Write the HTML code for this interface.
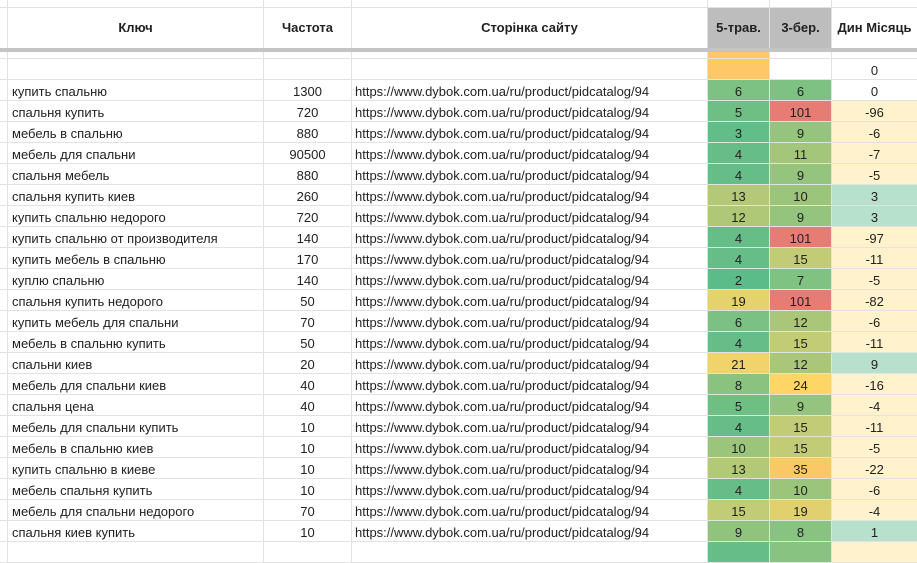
<!DOCTYPE html>
<html><head><meta charset="utf-8">
<style>
*{box-sizing:border-box;margin:0;padding:0}
body{width:917px;height:545px;overflow:hidden;background:#fff;font-family:"Liberation Sans","DejaVu Sans",sans-serif;font-size:13px;color:#222}
.r{display:flex;height:21px;border-bottom:1px solid #e2e2e2;white-space:nowrap}
.r>div{border-right:1px solid #e2e2e2;line-height:20px;padding-top:2px;overflow:hidden;flex:none}
.a{width:8px}.k{width:256px;padding-left:4px}.c{width:88px;text-align:center}.u{width:356px;padding-left:3px}
.t{width:62px;text-align:center}.d{width:85px;text-align:center;border-right:none!important}
.h{height:40px;font-weight:bold}.h>div{line-height:40px;padding-top:0}
.g{background:#bdbdbd}
.y{background:#fff2cc}.p{background:#b7e1cd}.R{background:#e67c73}
</style></head><body>
<div class="r" style="height:8px"><div class="a"></div><div class="k"></div><div class="c"></div><div class="u"></div><div class="t"></div><div class="t"></div><div class="d"></div></div>
<div class="r h" style="border-bottom:none"><div class="a"></div><div class="k" style="text-align:center;padding:0">Ключ</div><div class="c">Частота</div><div class="u" style="text-align:center;padding:0">Сторінка сайту</div><div class="t g">5-трав.</div><div class="t g">3-бер.</div><div class="d">Дин Місяць</div></div>
<div style="height:4px;background:#c4c4c4"></div>
<div class="r" style="height:7px"><div class="a"></div><div class="k"></div><div class="c"></div><div class="u"></div><div class="t" style="background:#fdc968"></div><div class="t"></div><div class="d" style="line-height:0"></div></div>
<div class="r"><div class="a"></div><div class="k"></div><div class="c"></div><div class="u"></div><div class="t" style="background:#fdc968"></div><div class="t"></div><div class="d">0</div></div>
<div class="r"><div class="a"></div><div class="k">купить спальню</div><div class="c">1300</div><div class="u">https://www.dybok.com.ua/ru/product/pidcatalog/94</div><div class="t" style="background:#7dc282">6</div><div class="t" style="background:#7dc282">6</div><div class="d">0</div></div>
<div class="r"><div class="a"></div><div class="k">спальня купить</div><div class="c">720</div><div class="u">https://www.dybok.com.ua/ru/product/pidcatalog/94</div><div class="t" style="background:#6fbf85">5</div><div class="t R">101</div><div class="d y">-96</div></div>
<div class="r"><div class="a"></div><div class="k">мебель в спальню</div><div class="c">880</div><div class="u">https://www.dybok.com.ua/ru/product/pidcatalog/94</div><div class="t" style="background:#62bd88">3</div><div class="t" style="background:#94c47e">9</div><div class="d y">-6</div></div>
<div class="r"><div class="a"></div><div class="k">мебель для спальни</div><div class="c">90500</div><div class="u">https://www.dybok.com.ua/ru/product/pidcatalog/94</div><div class="t" style="background:#66bd87">4</div><div class="t" style="background:#a4c67b">11</div><div class="d y">-7</div></div>
<div class="r"><div class="a"></div><div class="k">спальня мебель</div><div class="c">880</div><div class="u">https://www.dybok.com.ua/ru/product/pidcatalog/94</div><div class="t" style="background:#66bd87">4</div><div class="t" style="background:#94c47e">9</div><div class="d y">-5</div></div>
<div class="r"><div class="a"></div><div class="k">спальня купить киев</div><div class="c">260</div><div class="u">https://www.dybok.com.ua/ru/product/pidcatalog/94</div><div class="t" style="background:#b4c978">13</div><div class="t" style="background:#9cc57c">10</div><div class="d p">3</div></div>
<div class="r"><div class="a"></div><div class="k">купить спальню недорого</div><div class="c">720</div><div class="u">https://www.dybok.com.ua/ru/product/pidcatalog/94</div><div class="t" style="background:#aec878">12</div><div class="t" style="background:#94c47e">9</div><div class="d p">3</div></div>
<div class="r"><div class="a"></div><div class="k">купить спальню от производителя</div><div class="c">140</div><div class="u">https://www.dybok.com.ua/ru/product/pidcatalog/94</div><div class="t" style="background:#66bd87">4</div><div class="t R">101</div><div class="d y">-97</div></div>
<div class="r"><div class="a"></div><div class="k">купить мебель в спальню</div><div class="c">170</div><div class="u">https://www.dybok.com.ua/ru/product/pidcatalog/94</div><div class="t" style="background:#66bd87">4</div><div class="t" style="background:#c2cc76">15</div><div class="d y">-11</div></div>
<div class="r"><div class="a"></div><div class="k">куплю спальню</div><div class="c">140</div><div class="u">https://www.dybok.com.ua/ru/product/pidcatalog/94</div><div class="t" style="background:#5bbb89">2</div><div class="t" style="background:#80c282">7</div><div class="d y">-5</div></div>
<div class="r"><div class="a"></div><div class="k">спальня купить недорого</div><div class="c">50</div><div class="u">https://www.dybok.com.ua/ru/product/pidcatalog/94</div><div class="t" style="background:#e6d26d">19</div><div class="t R">101</div><div class="d y">-82</div></div>
<div class="r"><div class="a"></div><div class="k">купить мебель для спальни</div><div class="c">70</div><div class="u">https://www.dybok.com.ua/ru/product/pidcatalog/94</div><div class="t" style="background:#7ac183">6</div><div class="t" style="background:#aac779">12</div><div class="d y">-6</div></div>
<div class="r"><div class="a"></div><div class="k">мебель в спальню купить</div><div class="c">50</div><div class="u">https://www.dybok.com.ua/ru/product/pidcatalog/94</div><div class="t" style="background:#66bd87">4</div><div class="t" style="background:#c2cc76">15</div><div class="d y">-11</div></div>
<div class="r"><div class="a"></div><div class="k">спальни киев</div><div class="c">20</div><div class="u">https://www.dybok.com.ua/ru/product/pidcatalog/94</div><div class="t" style="background:#f0d36a">21</div><div class="t" style="background:#aac779">12</div><div class="d p">9</div></div>
<div class="r"><div class="a"></div><div class="k">мебель для спальни киев</div><div class="c">40</div><div class="u">https://www.dybok.com.ua/ru/product/pidcatalog/94</div><div class="t" style="background:#8ac380">8</div><div class="t" style="background:#ffd666">24</div><div class="d y">-16</div></div>
<div class="r"><div class="a"></div><div class="k">спальня цена</div><div class="c">40</div><div class="u">https://www.dybok.com.ua/ru/product/pidcatalog/94</div><div class="t" style="background:#6fbf85">5</div><div class="t" style="background:#94c47e">9</div><div class="d y">-4</div></div>
<div class="r"><div class="a"></div><div class="k">мебель для спальни купить</div><div class="c">10</div><div class="u">https://www.dybok.com.ua/ru/product/pidcatalog/94</div><div class="t" style="background:#66bd87">4</div><div class="t" style="background:#c2cc76">15</div><div class="d y">-11</div></div>
<div class="r"><div class="a"></div><div class="k">мебель в спальню киев</div><div class="c">10</div><div class="u">https://www.dybok.com.ua/ru/product/pidcatalog/94</div><div class="t" style="background:#9cc57c">10</div><div class="t" style="background:#c2cc76">15</div><div class="d y">-5</div></div>
<div class="r"><div class="a"></div><div class="k">купить спальню в киеве</div><div class="c">10</div><div class="u">https://www.dybok.com.ua/ru/product/pidcatalog/94</div><div class="t" style="background:#b4c978">13</div><div class="t" style="background:#fac864">35</div><div class="d y">-22</div></div>
<div class="r"><div class="a"></div><div class="k">мебель спальня купить</div><div class="c">10</div><div class="u">https://www.dybok.com.ua/ru/product/pidcatalog/94</div><div class="t" style="background:#66bd87">4</div><div class="t" style="background:#9cc57c">10</div><div class="d y">-6</div></div>
<div class="r"><div class="a"></div><div class="k">мебель для спальни недорого</div><div class="c">70</div><div class="u">https://www.dybok.com.ua/ru/product/pidcatalog/94</div><div class="t" style="background:#c2cc76">15</div><div class="t" style="background:#e1d06e">19</div><div class="d y">-4</div></div>
<div class="r"><div class="a"></div><div class="k">спальня киев купить</div><div class="c">10</div><div class="u">https://www.dybok.com.ua/ru/product/pidcatalog/94</div><div class="t" style="background:#90c47e">9</div><div class="t" style="background:#88c381">8</div><div class="d p">1</div></div>
<div class="r"><div class="a"></div><div class="k"></div><div class="c"></div><div class="u"></div><div class="t" style="background:#66bd87"></div><div class="t" style="background:#88c381"></div><div class="d y"></div></div>
</body></html>
